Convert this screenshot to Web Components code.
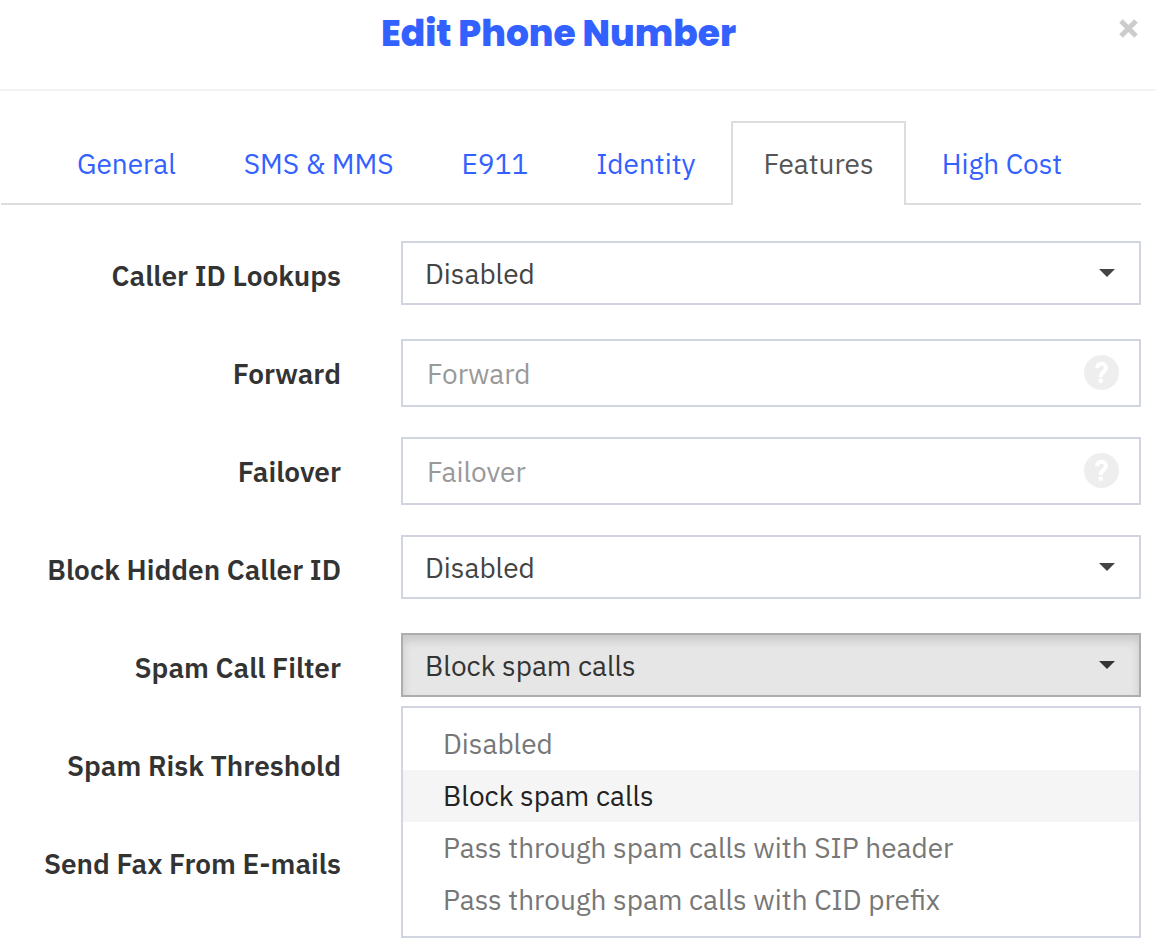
<!DOCTYPE html>
<html lang="en">
<head>
<meta charset="utf-8">
<meta name="viewport" content="width=device-width, initial-scale=1">
<title>Edit Phone Number</title>
<style>
	body {
		margin: 0;
		background: #fff;
		color: #333;
		font-family: "IBM Plex Sans", "Noto Sans", sans-serif;
		font-size: 28px;
		line-height: 36px;
		--line: #ddd;
		--control-border: #d0d5df;
		--link: #3361ff;
	}
	main {
		/* room for the open menu below the last row */
		padding-bottom: 45px;
	}
</style>
</head>
<body>
<modal-header>Edit Phone Number</modal-header>
<main>
	<tab-bar>
		<tab-link>General</tab-link>
		<tab-link>SMS &amp; MMS</tab-link>
		<tab-link>E911</tab-link>
		<tab-link>Identity</tab-link>
		<tab-link active>Features</tab-link>
		<tab-link>High Cost</tab-link>
	</tab-bar>
	<form-rows>
		<select-row label="Caller ID Lookups" value="Disabled"></select-row>
		<input-row label="Forward" placeholder="Forward" help></input-row>
		<input-row label="Failover" placeholder="Failover" help></input-row>
		<select-row label="Block Hidden Caller ID" value="Disabled"></select-row>
		<select-row label="Spam Call Filter" value="Block spam calls" open>
			<menu-option>Disabled</menu-option>
			<menu-option selected>Block spam calls</menu-option>
			<menu-option>Pass through spam calls with SIP header</menu-option>
			<menu-option>Pass through spam calls with CID prefix</menu-option>
		</select-row>
		<input-row label="Spam Risk Threshold"></input-row>
		<input-row label="Send Fax From E-mails"></input-row>
	</form-rows>
</main>

<script>
// shared by both kinds of form row
const rowStyles = `
	:host {
		display: grid;
		grid-template-columns: 341px minmax(0, 1fr);
		column-gap: 60px;
		min-height: 68px;
	}
	label {
		align-self: center;
		padding-top: 2px;
		text-align: right;
		font-weight: 600;
	}
	.control {
		position: relative;
		align-self: start;
		display: grid;
		align-items: center;
	}
	.control > select, .control > input, .control > svg {
		grid-area: 1 / 1;
	}
	.control > svg {
		justify-self: end;
		pointer-events: none;
	}
	select, input {
		appearance: none;
		box-sizing: border-box;
		width: 100%;
		margin: 0;
		border: 2px solid var(--control-border);
		border-radius: 0;
		outline: none;
		background: #fff;
		color: #444;
		font: inherit;
	}
`;

class BaseElement extends HTMLElement {
	constructor() {
		super();
		this.attachShadow({ mode: 'open' });
	}

	connectedCallback() {
		this.shadowRoot.innerHTML = this.render();
	}
}

class ModalHeader extends BaseElement {
	render() {
		return `
			<style>
				:host {
					display: flex;
					align-items: flex-start;
					height: 89px;
					border-bottom: 2px solid #f3f3f3;
				}
				h1 {
					flex: 1;
					margin: 0;
					padding-top: 12px;
					color: var(--link);
					font: 800 36px/44px Poppins, Inter, sans-serif;
					text-align: center;
				}
				button {
					display: flex;
					margin: 18px 17px 0 0;
					padding: 0;
					border: 0;
					background: none;
				}
			</style>
			<h1><slot></slot></h1>
			<button type="button" aria-label="Close">
				<svg width="22" height="22" viewBox="0 0 22 22">
					<path d="M4 3 L19 18 M19 3 L4 18" stroke="#ccc" stroke-width="5"/>
				</svg>
			</button>
		`;
	}
}

class TabBar extends BaseElement {
	render() {
		return `
			<style>
				:host {
					display: block;
					margin: 30px 15px 0 1px;
					border-bottom: 2px solid var(--line);
				}
				nav {
					display: flex;
					gap: 4px;
					margin-bottom: -2px;
					padding-left: 44px;
				}
			</style>
			<nav><slot></slot></nav>
		`;
	}
}

class TabLink extends BaseElement {
	render() {
		return `
			<style>
				:host { display: block; }
				a {
					display: block;
					padding: 23px 30px;
					border: 2px solid transparent;
					border-bottom: 0;
					color: var(--link);
					text-decoration: none;
				}
				:host([active]) a {
					border-color: var(--line);
					background: #fff;
					color: #555;
				}
			</style>
			<a href="#"><slot></slot></a>
		`;
	}
}

class FormRows extends BaseElement {
	render() {
		return `
			<style>
				:host {
					display: flex;
					flex-direction: column;
					gap: 30px;
					padding: 36px 15px 0 0;
				}
			</style>
			<slot></slot>
		`;
	}
}

class SelectRow extends BaseElement {
	render() {
		const menu = this.hasAttribute('open')
			? '<div class="menu" role="listbox"><slot></slot></div>'
			: '';
		return `
			<style>
				${rowStyles}
				select {
					height: 64px;
					padding: 2px 60px 0 22px;
				}
				.control > svg { margin-right: 26px; }
				.control { color: #444; }
				:host([open]) .control { color: #333; }
				:host([open]) select {
					border-color: #adadad;
					background: #e6e6e6;
					box-shadow: inset 0 6px 10px rgba(0, 0, 0, 0.125);
					color: #333;
				}
				.menu {
					position: absolute;
					z-index: 1;
					top: 73px;
					left: 0;
					right: 0;
					padding: 10px 0;
					border: 2px solid var(--control-border);
					background: #fff;
				}
			</style>
			<label for="field">${this.getAttribute('label')}</label>
			<div class="control">
				<select id="field"><option>${this.getAttribute('value')}</option></select>
				<svg width="16" height="8" viewBox="0 0 16 8"><path d="M0 0H16L8 8Z" fill="currentColor"/></svg>
				${menu}
			</div>
		`;
	}
}

class MenuOption extends BaseElement {
	render() {
		return `
			<style>
				:host { display: block; }
				button {
					display: block;
					width: 100%;
					padding: 8px 40px;
					border: 0;
					background: none;
					color: #777;
					font: inherit;
					text-align: left;
				}
				:host([selected]) button {
					background: #f5f5f5;
					color: #222;
				}
			</style>
			<button type="button" role="option"><slot></slot></button>
		`;
	}
}

class InputRow extends BaseElement {
	render() {
		const help = this.hasAttribute('help')
			? `<svg width="36" height="36" viewBox="0 0 36 36">
					<circle cx="18.5" cy="17.5" r="17.5" fill="#eee"/>
					<path d="M14 13.2C14 7.2 23 7.5 23 12.8C23 16.8 17.8 16.8 17.8 22" fill="none" stroke="#fff" stroke-width="4"/>
					<circle cx="17.7" cy="25.7" r="2.4" fill="#fff"/>
				</svg>`
			: '';
		return `
			<style>
				${rowStyles}
				input {
					height: 68px;
					padding: 0 70px 0 24px;
				}
				input::placeholder {
					color: #999;
					opacity: 1;
				}
				.control > svg { margin-right: 22px; }
			</style>
			<label for="field">${this.getAttribute('label')}</label>
			<div class="control">
				<input id="field" type="text" placeholder="${this.getAttribute('placeholder') || ''}">
				${help}
			</div>
		`;
	}
}

customElements.define('modal-header', ModalHeader);
customElements.define('tab-bar', TabBar);
customElements.define('tab-link', TabLink);
customElements.define('form-rows', FormRows);
customElements.define('menu-option', MenuOption);
customElements.define('select-row', SelectRow);
customElements.define('input-row', InputRow);
</script>
</body>
</html>
